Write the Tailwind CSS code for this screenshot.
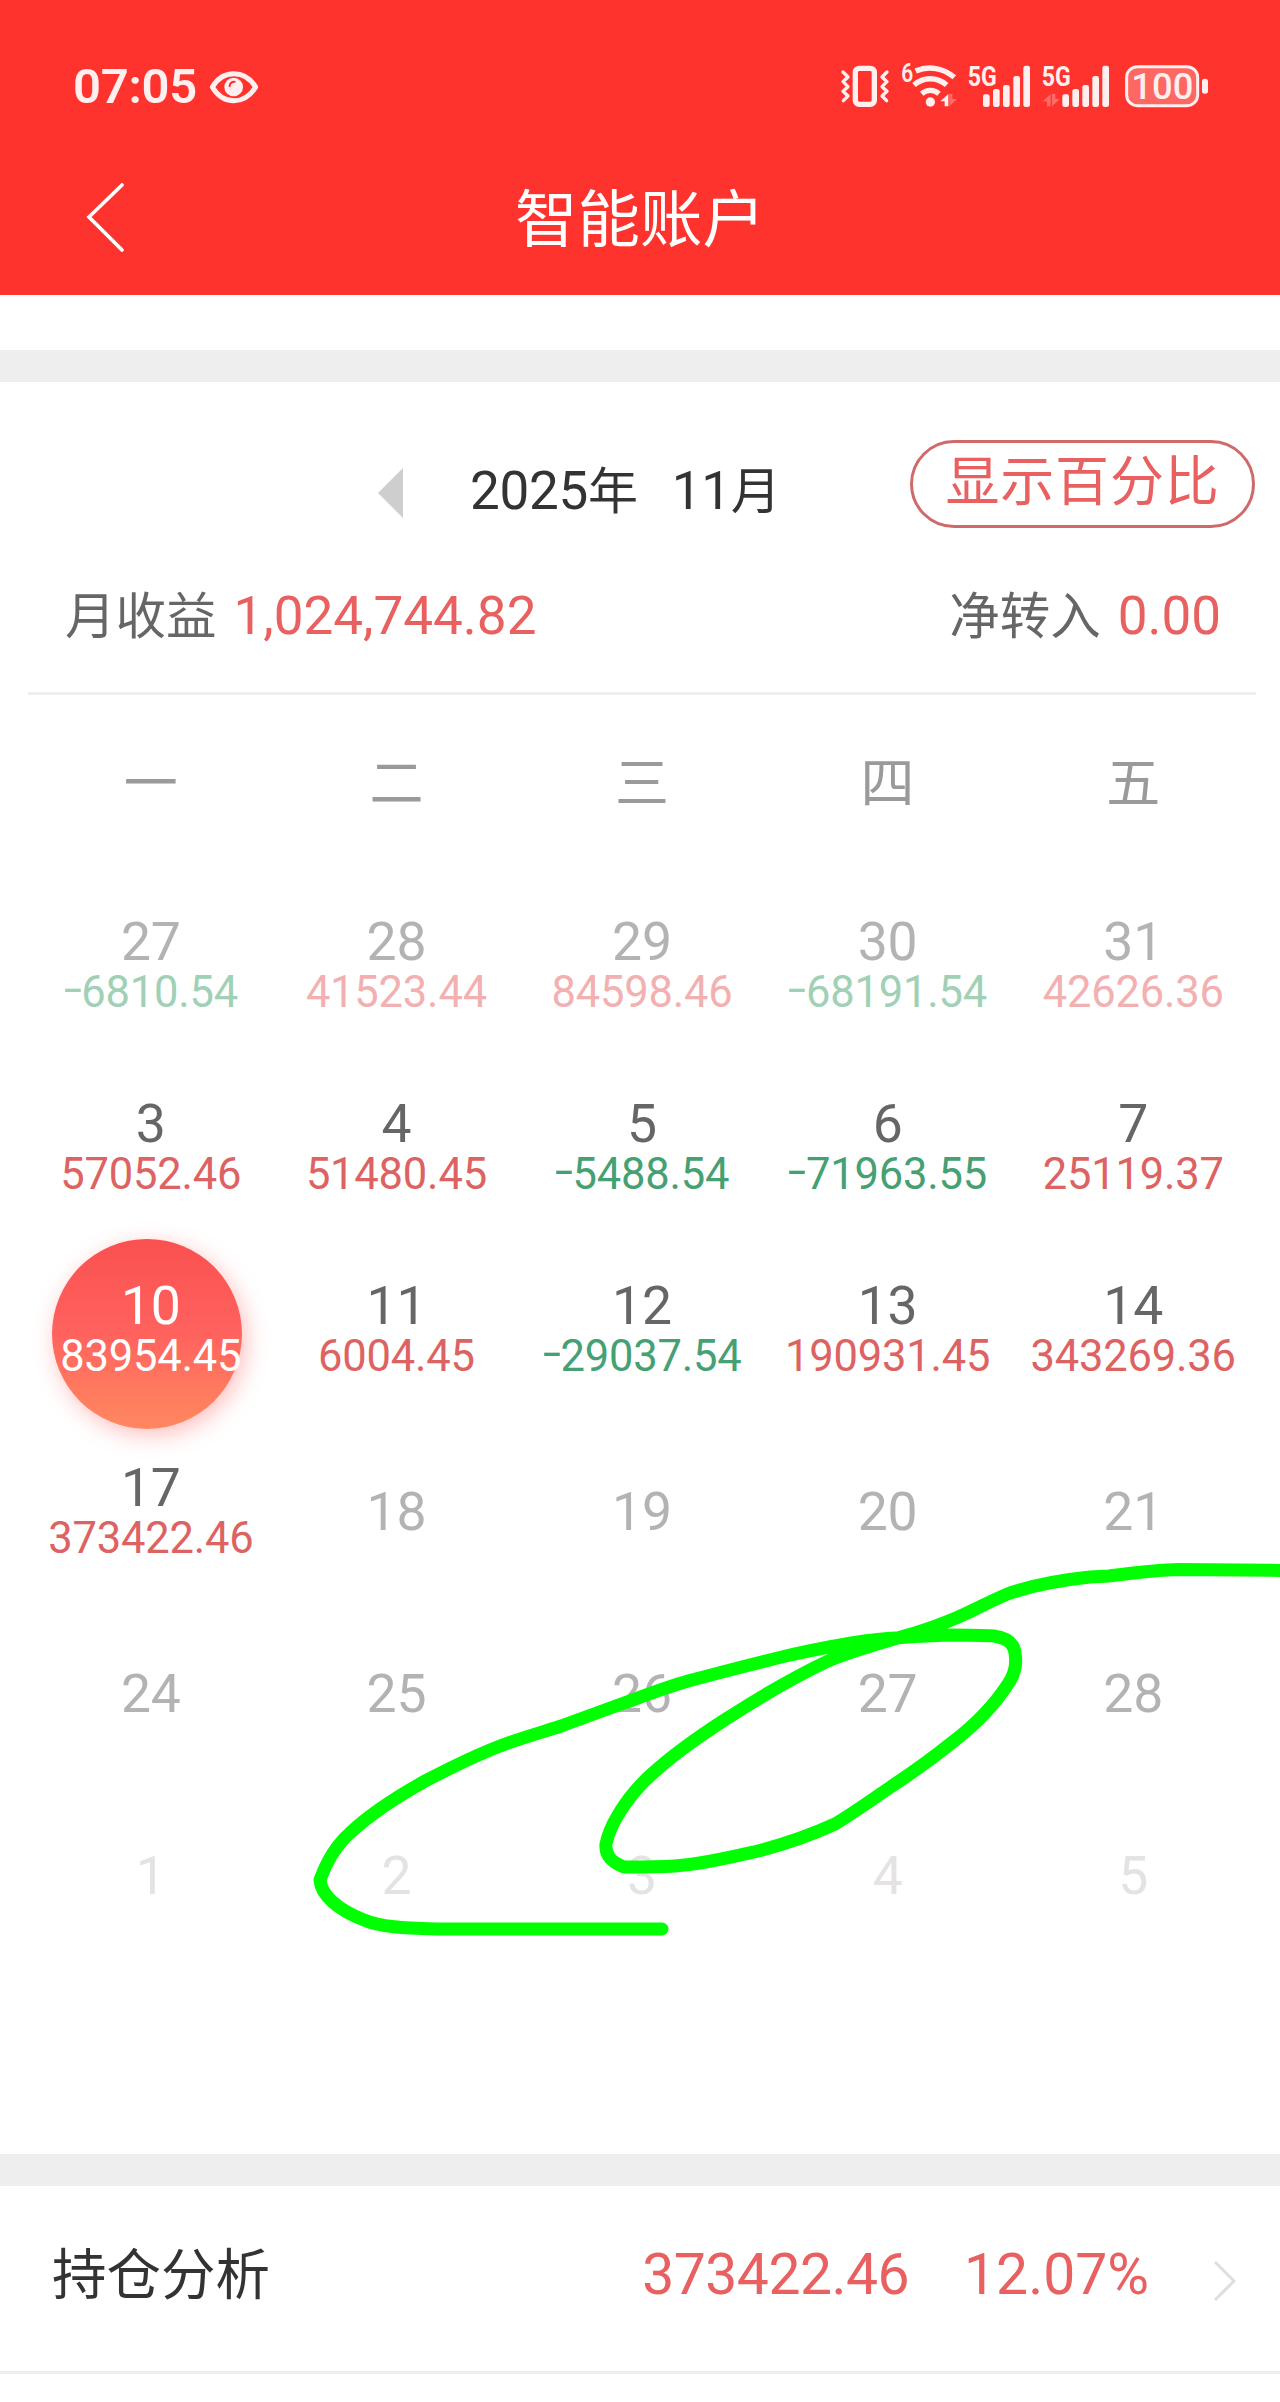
<!DOCTYPE html>
<html lang="zh-CN">
  <head>
    <meta charset="UTF-8" />
    <meta name="viewport" content="width=device-width, initial-scale=1.0" />
    <title>智能账户</title>
    <script src="https://cdn.jsdelivr.net/npm/@tailwindcss/browser@4"></script>
  </head>
  <body class="relative min-h-screen w-[1280px] overflow-x-hidden bg-white font-['Roboto','Noto_Sans_CJK_SC',sans-serif] text-[#666]">
    <header class="h-[295px] bg-[#ff332d] text-white">
      <!-- Status bar -->
      <div class="flex h-[170px] items-center pl-[73px] pr-[71px] text-[#fff0ef]">
        <span class="pt-1 text-[49px] font-semibold leading-[56px] tracking-[-0.3px]">07:05</span>
        <svg class="ml-[12px] mt-[3px] h-[34px] w-[50px]" viewBox="506 90 150 102" fill="none">
          <path d="M516 141 C548 88 613 88 646 141 C613 196 548 196 516 141 Z" stroke="currentColor" stroke-width="15" stroke-linejoin="round" />
          <circle cx="580" cy="141" r="28" fill="currentColor" />
          <path d="M568 139 C568 130 574 125 583 125" stroke="#ff332d" stroke-width="6" stroke-linecap="round" />
        </svg>

        <svg class="ml-auto h-[50px] w-[50px]" viewBox="60 60 150 150" fill="none" stroke="currentColor">
          <rect x="106" y="85" width="57" height="108" rx="12" stroke-width="16" />
          <path d="M69 96 L84 111 L69 125 L84 140 L69 154 L84 168 L70 182" stroke-width="10" stroke-linecap="round" stroke-linejoin="round" />
          <path d="M201 96 L186 111 L201 125 L186 140 L201 154 L186 168 L200 182" stroke-width="10" stroke-linecap="round" stroke-linejoin="round" />
        </svg>
        <svg class="ml-[10px] h-[50px] w-[58px]" viewBox="240 60 174 150" fill="none">
          <text x="244" y="126" font-size="76" font-weight="600" fill="currentColor" textLength="36" lengthAdjust="spacingAndGlyphs">6</text>
          <g stroke="currentColor" stroke-width="16">
            <path d="M287 93 C326 76 370 84 403 112" />
            <path d="M282 135 C310 110 351 110 380 135" />
            <path d="M305 161 C320 148 342 148 357 161" />
          </g>
          <circle cx="331" cy="186" r="14" fill="currentColor" />
          <path d="M385 162 V199 H374 V184 H361 Z" fill="currentColor" />
          <path d="M388 199 V162 H397 V177 H411 Z" fill="currentColor" opacity=".3" />
        </svg>
        <svg class="ml-[10px] h-[50px] w-[63px]" viewBox="444 60 189 150" fill="currentColor">
          <text x="443" y="137" font-size="83" font-weight="700" textLength="87" lengthAdjust="spacingAndGlyphs">5G</text>
          <rect x="489" y="163" width="20" height="38" rx="7" />
          <rect x="519" y="147" width="20" height="54" rx="7" />
          <rect x="549" y="135" width="20" height="66" rx="7" />
          <rect x="580" y="108" width="20" height="93" rx="7" />
          <rect x="610" y="77" width="20" height="124" rx="7" />
        </svg>
        <svg class="ml-[11px] h-[50px] w-[68px]" viewBox="666 60 204 150" fill="currentColor">
          <text x="665" y="137" font-size="83" font-weight="700" textLength="87" lengthAdjust="spacingAndGlyphs">5G</text>
          <path d="M692 162 V199 H681 V184 H668 Z M696 199 V162 H706 V177 H720 Z" opacity=".3" />
          <rect x="727" y="163" width="20" height="38" rx="7" />
          <rect x="757" y="147" width="20" height="54" rx="7" />
          <rect x="787" y="135" width="20" height="66" rx="7" />
          <rect x="817" y="108" width="20" height="93" rx="7" />
          <rect x="847" y="77" width="20" height="124" rx="7" />
        </svg>
        <svg class="ml-[14px] h-[50px] w-[85px]" viewBox="912 60 255 150" fill="currentColor">
          <rect x="920" y="80" width="213" height="117" rx="32" fill-opacity=".28" stroke="currentColor" stroke-width="9" />
          <rect x="1146" y="116" width="18" height="45" rx="8" />
          <text x="934" y="178" font-size="112" font-weight="500" textLength="186" lengthAdjust="spacingAndGlyphs">100</text>
        </svg>
      </div>

      <!-- Title bar -->
      <div class="flex h-[97px] items-center px-[86px]">
        <svg class="-mt-[2px] h-[70px] w-[40px]" viewBox="0 0 40 70" fill="none" stroke="currentColor" stroke-width="3.6" stroke-linecap="round">
          <path d="M36 2 L3 34 L36 67" />
        </svg>
        <h1 class="flex-1 pr-[40px] pt-1 text-center text-[62.5px] leading-[72px]">智能账户</h1>
      </div>
    </header>

    <div class="mt-[55px] h-8 bg-[#eee]"></div>

    <!-- Calendar -->
    <section class="h-[1772px] pt-[58px]">
      <div class="flex h-[88px] items-center pl-[378px] pr-[25px]">
        <svg class="mt-[17px] h-[50px] w-[26px]" viewBox="0 0 26 50">
          <path d="M0 25 L25 0 V50 Z" fill="#cecece" />
        </svg>
        <div class="ml-[66px] flex gap-[34px] pt-[15px] text-[53px] leading-[60px] tracking-[-0.3px] text-[#333]">
          <span>2025<span class="text-[50px]">年</span></span>
          <span>11<span class="text-[50px]">月</span></span>
        </div>
        <button class="ml-auto h-[88px] w-[345px] rounded-full border-3 border-[#d0696a] pb-[3px] text-[54px] leading-[76px] tracking-[0.8px] text-[#e86060]">显示百分比</button>
      </div>

      <div class="mt-[58px] flex justify-between pl-[65px] pr-[59px] text-[53px] leading-[60px]">
        <div class="flex gap-[17px]">
          <span class="pt-px text-[50.5px]">月收益</span>
          <span class="text-[#e86060]">1,024,744.82</span>
        </div>
        <div class="flex gap-[17px]">
          <span class="pt-px text-[50.5px]">净转入</span>
          <span class="text-[#e86060]">0.00</span>
        </div>
      </div>

      <div class="ml-[28px] mr-[24px] mt-[45px] border-t-3 border-[#eee]"></div>

      <div class="ml-[28px] mr-[24px] grid h-[180px] grid-cols-5 place-items-center text-[54px] leading-[60px] text-[#9b999b]">
        <span>一</span>
        <span>二</span>
        <span>三</span>
        <span>四</span>
        <span>五</span>
      </div>

      <div class="ml-[28px] mr-[24px] grid auto-rows-[182px] grid-cols-5 text-center text-[43.5px] leading-[46px] tracking-[-0.2px] text-[#dd6262]">
        <!-- Last days of October -->
        <div class="flex flex-col justify-center pb-[3px] text-[#f2b0b1]">
          <span class="text-[53.5px] leading-[56px] text-[#b4b2b4]">27</span>
          <span class="text-[#a0d0b5]"><span class="mx-[3px] inline-block -translate-y-[3px] scale-x-150">-</span>6810.54</span>
        </div>
        <div class="flex flex-col justify-center pb-[3px] text-[#f2b0b1]">
          <span class="text-[53.5px] leading-[56px] text-[#b4b2b4]">28</span>
          <span>41523.44</span>
        </div>
        <div class="flex flex-col justify-center pb-[3px] text-[#f2b0b1]">
          <span class="text-[53.5px] leading-[56px] text-[#b4b2b4]">29</span>
          <span>84598.46</span>
        </div>
        <div class="flex flex-col justify-center pb-[3px] text-[#f2b0b1]">
          <span class="text-[53.5px] leading-[56px] text-[#b4b2b4]">30</span>
          <span class="text-[#a0d0b5]"><span class="mx-[3px] inline-block -translate-y-[3px] scale-x-150">-</span>68191.54</span>
        </div>
        <div class="flex flex-col justify-center pb-[3px] text-[#f2b0b1]">
          <span class="text-[53.5px] leading-[56px] text-[#b4b2b4]">31</span>
          <span>42626.36</span>
        </div>

        <div class="flex flex-col justify-center pb-[3px]">
          <span class="text-[53.5px] leading-[56px] text-[#666]">3</span>
          <span>57052.46</span>
        </div>
        <div class="flex flex-col justify-center pb-[3px]">
          <span class="text-[53.5px] leading-[56px] text-[#666]">4</span>
          <span>51480.45</span>
        </div>
        <div class="flex flex-col justify-center pb-[3px]">
          <span class="text-[53.5px] leading-[56px] text-[#666]">5</span>
          <span class="text-[#45a073]"><span class="mx-[3px] inline-block -translate-y-[3px] scale-x-150">-</span>5488.54</span>
        </div>
        <div class="flex flex-col justify-center pb-[3px]">
          <span class="text-[53.5px] leading-[56px] text-[#666]">6</span>
          <span class="text-[#45a073]"><span class="mx-[3px] inline-block -translate-y-[3px] scale-x-150">-</span>71963.55</span>
        </div>
        <div class="flex flex-col justify-center pb-[3px]">
          <span class="text-[53.5px] leading-[56px] text-[#666]">7</span>
          <span>25119.37</span>
        </div>

        <!-- Selected day -->
        <div class="relative flex flex-col justify-center pb-[3px] text-white">
          <div class="absolute top-0 left-[24px] size-[190px] rounded-full bg-linear-to-b from-[#fa5050] via-[#ff625e] to-[#ff8860] shadow-[4px_6px_22px_rgba(255,70,70,0.35)]"></div>
          <span class="relative text-[53.5px] leading-[56px]">10</span>
          <span class="relative">83954.45</span>
        </div>
        <div class="flex flex-col justify-center pb-[3px]">
          <span class="text-[53.5px] leading-[56px] text-[#666]">11</span>
          <span>6004.45</span>
        </div>
        <div class="flex flex-col justify-center pb-[3px]">
          <span class="text-[53.5px] leading-[56px] text-[#666]">12</span>
          <span class="text-[#45a073]"><span class="mx-[3px] inline-block -translate-y-[3px] scale-x-150">-</span>29037.54</span>
        </div>
        <div class="flex flex-col justify-center pb-[3px]">
          <span class="text-[53.5px] leading-[56px] text-[#666]">13</span>
          <span>190931.45</span>
        </div>
        <div class="flex flex-col justify-center pb-[3px]">
          <span class="text-[53.5px] leading-[56px] text-[#666]">14</span>
          <span>343269.36</span>
        </div>

        <div class="flex flex-col justify-center pb-[3px]">
          <span class="text-[53.5px] leading-[56px] text-[#666]">17</span>
          <span>373422.46</span>
        </div>
        <div class="text-[53.5px] leading-[182px] text-[#b4b2b4]">18</div>
        <div class="text-[53.5px] leading-[182px] text-[#b4b2b4]">19</div>
        <div class="text-[53.5px] leading-[182px] text-[#b4b2b4]">20</div>
        <div class="text-[53.5px] leading-[182px] text-[#b4b2b4]">21</div>

        <div class="text-[53.5px] leading-[182px] text-[#b4b2b4]">24</div>
        <div class="text-[53.5px] leading-[182px] text-[#b4b2b4]">25</div>
        <div class="text-[53.5px] leading-[182px] text-[#b4b2b4]">26</div>
        <div class="text-[53.5px] leading-[182px] text-[#b4b2b4]">27</div>
        <div class="text-[53.5px] leading-[182px] text-[#b4b2b4]">28</div>

        <!-- First days of December -->
        <div class="text-[53.5px] leading-[182px] text-[#e5e2e4]">1</div>
        <div class="text-[53.5px] leading-[182px] text-[#e5e2e4]">2</div>
        <div class="text-[53.5px] leading-[182px] text-[#e5e2e4]">3</div>
        <div class="text-[53.5px] leading-[182px] text-[#e5e2e4]">4</div>
        <div class="text-[53.5px] leading-[182px] text-[#e5e2e4]">5</div>
      </div>
    </section>

    <div class="h-8 bg-[#eee]"></div>

    <!-- Position analysis -->
    <div class="flex h-[188px] items-center border-b-3 border-[#eee] pb-[8px] pl-[52px] pr-[44px] text-[57px] leading-[64px] text-[#e86060]">
      <span class="text-[54.5px] text-[#333]">持仓分析</span>
      <span class="ml-auto tracking-[-0.5px]">373422.46</span>
      <span class="ml-[55px]">12.07%</span>
      <svg class="ml-[65px] mt-[12px] h-[42px] w-[22px]" viewBox="0 0 22 42" fill="none" stroke="#dedede" stroke-width="3">
        <path d="M1 2 L20 21 L1 40" />
      </svg>
    </div>

    <!-- Pen stroke drawn over the calendar -->
    <svg class="pointer-events-none absolute left-0 top-[1540px] h-[420px] w-[1280px]" viewBox="0 1540 1280 420" fill="none" stroke="#00ff00" stroke-width="13" stroke-linecap="round" stroke-linejoin="round">
      <path
        d="M662 1929 H436 C404 1928 380 1927 364 1920 C338 1910 321 1895 320 1880
        C325 1866 333 1848 350 1833 C368 1816 398 1796 427 1780 C452 1767 474 1756 500 1746
        C521 1738 540 1733 561 1726 L624 1703 C646 1695 667 1687 688 1681
        C722 1672 756 1663 790 1655 C818 1649 845 1643 873 1640 C899 1637 924 1636 950 1635
        C965 1635 980 1635 994 1636 C1008 1638 1014 1644 1015 1653 C1017 1664 1015 1674 1008 1684
        C995 1704 976 1724 954 1741 C934 1757 912 1773 892 1786 C873 1799 855 1812 835 1824
        C811 1835 785 1844 758 1851 C732 1857 704 1864 675 1866 C658 1867 640 1867 624 1867
        C611 1862 605 1855 606 1844 C608 1834 612 1825 618 1815 C627 1800 638 1786 653 1773
        C674 1754 698 1737 726 1719 C757 1699 790 1679 828 1661 C857 1649 889 1641 918 1632
        C931 1628 944 1623 956 1618 C975 1610 992 1600 1010 1593 C1034 1585 1061 1580 1090 1577
        L1109 1576 C1133 1573 1156 1570 1179 1569.5 L1290 1570.5"
      />
    </svg>
  </body>
</html>
